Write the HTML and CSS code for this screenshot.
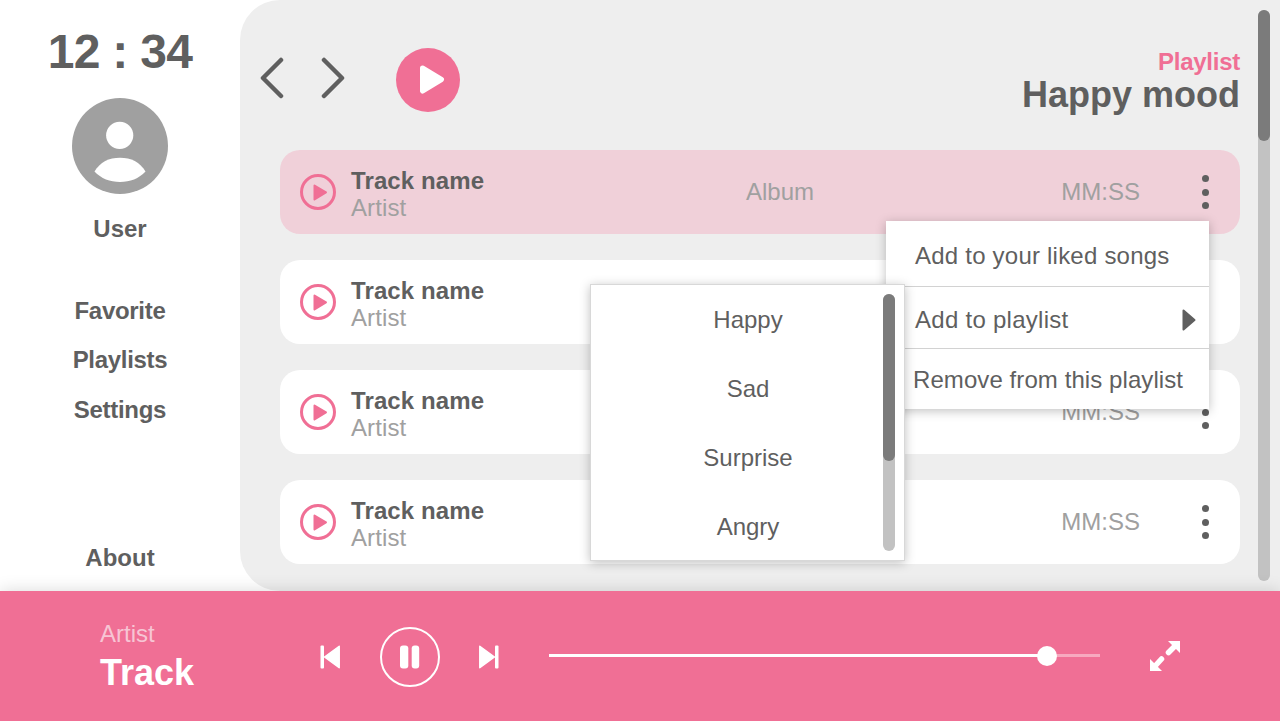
FILE: index.html
```html
<!DOCTYPE html>
<html lang="en">
<head>
<meta charset="UTF-8">
<meta name="viewport" content="width=device-width, initial-scale=1.0">
<title>Happy mood</title>
<link rel="stylesheet" href="styles.css">
</head>
<body>

<div class="top">
    <aside class="sidebar">
        <div class="clock">12 : 34</div>
        <svg class="avatar" viewBox="0 0 96 96">
            <circle cx="48" cy="48" r="48" fill="#a0a0a0"/>
            <circle cx="47.700" cy="37.300" r="13.600" fill="#fff"/>
            <path d="M22.500 73.500C28 64 37 59.700 48 59.700C59 59.700 68 64 73.500 73.500C67 80.500 58 84 48 84C38 84 29 80.500 22.500 73.500Z" fill="#fff"/>
        </svg>
        <div class="user">User</div>
        <nav class="nav">
            <a>Favorite</a>
            <a>Playlists</a>
            <a>Settings</a>
        </nav>
        <a class="about">About</a>
    </aside>

    <main class="panel">
        <header class="head">
            <svg class="arrow" viewBox="0 0 24 42"><path d="M21 3L3 21L21 39" /></svg>
            <svg class="arrow arrow-next" viewBox="0 0 24 42"><path d="M3 3L21 21L3 39" /></svg>
            <svg class="play-big" viewBox="0 0 64 64">
                <circle cx="32" cy="32" r="32" fill="#f06f95"/>
                <path d="M26.500 20L45.500 31.500L26.500 43Z" fill="#fff" stroke="#fff" stroke-width="5" stroke-linejoin="round"/>
            </svg>
            <div class="title">
                <div class="title-small">Playlist</div>
                <div class="title-big">Happy mood</div>
            </div>
        </header>

        <div class="rows">
            <div class="row row-active">
                <svg class="row-play" viewBox="0 0 36 36"><circle cx="18" cy="18" r="16.500" /><path d="M14.500 11.500L26 18.300L14.500 25.500Z" /></svg>
                <div class="track"><b>Track name</b><span>Artist</span></div>
                <div class="album">Album</div>
                <div class="time">MM:SS</div>
                <div class="dots"><i></i><i></i><i></i></div>
            </div>
            <div class="row">
                <svg class="row-play" viewBox="0 0 36 36"><circle cx="18" cy="18" r="16.500" /><path d="M14.500 11.500L26 18.300L14.500 25.500Z" /></svg>
                <div class="track"><b>Track name</b><span>Artist</span></div>
                <div class="time">MM:SS</div>
                <div class="dots"><i></i><i></i><i></i></div>
            </div>
            <div class="row">
                <svg class="row-play" viewBox="0 0 36 36"><circle cx="18" cy="18" r="16.500" /><path d="M14.500 11.500L26 18.300L14.500 25.500Z" /></svg>
                <div class="track"><b>Track name</b><span>Artist</span></div>
                <div class="time">MM:SS</div>
                <div class="dots"><i></i><i></i><i></i></div>
            </div>
            <div class="row">
                <svg class="row-play" viewBox="0 0 36 36"><circle cx="18" cy="18" r="16.500" /><path d="M14.500 11.500L26 18.300L14.500 25.500Z" /></svg>
                <div class="track"><b>Track name</b><span>Artist</span></div>
                <div class="time">MM:SS</div>
                <div class="dots"><i></i><i></i><i></i></div>
            </div>
        </div>

        <div class="scroll"><div class="scroll-thumb"></div></div>
    </main>
</div>

<footer class="player">
    <div class="now">
        <span>Artist</span>
        <b>Track</b>
    </div>
    <svg class="skip" viewBox="0 0 20 24"><rect x="0.500" y="0.500" width="3.500" height="23" rx="1"/><path d="M19.200 1.300V22.700L4.500 12Z" stroke="#fff" stroke-width="1.500" stroke-linejoin="round"/></svg>
    <svg class="pause" viewBox="0 0 60 60">
        <circle cx="30" cy="30" r="29" fill="none" stroke="#fff" stroke-width="2"/>
        <rect x="20" y="18.500" width="8.300" height="23" rx="3" fill="#fff"/>
        <rect x="31.700" y="18.500" width="7.500" height="23" rx="3" fill="#fff"/>
    </svg>
    <svg class="skip" viewBox="0 0 20 24"><path d="M0.800 1.300V22.700L15.500 12Z" stroke="#fff" stroke-width="1.500" stroke-linejoin="round"/><rect x="16" y="0.500" width="3.500" height="23" rx="1"/></svg>
    <div class="slider">
        <div class="slider-fill"><div class="slider-knob"></div></div>
    </div>
    <svg class="expand" viewBox="0 0 32 32">
        <path d="M19 1H31V13Z" fill="#fff"/>
        <path d="M25 7L19.500 12.500" stroke="#fff" stroke-width="5.500" stroke-linecap="round"/>
        <path d="M13 31H1V19Z" fill="#fff"/>
        <path d="M7 25L12.500 19" stroke="#fff" stroke-width="5.500" stroke-linecap="round"/>
    </svg>
</footer>

<div class="menu">
    <div class="menu-item menu-first">Add to your liked songs</div>
    <div class="menu-item menu-sub">Add to playlist
        <svg class="menu-arrow" viewBox="0 0 14 22"><path d="M1.500 1.500L12.500 11L1.500 20.500Z" fill="#5f5f5f" stroke="#5f5f5f" stroke-width="2" stroke-linejoin="round"/></svg>
    </div>
    <div class="menu-item menu-last">Remove from this playlist</div>
</div>

<div class="picker">
    <div class="picker-list">
        <div>Happy</div>
        <div>Sad</div>
        <div>Surprise</div>
        <div>Angry</div>
    </div>
    <div class="picker-scroll"><div class="picker-thumb"></div></div>
</div>

</body>
</html>
```

FILE: styles.css
```css
html, body {
    margin: 0;
    height: 100%;
}
body {
    width: 1280px;
    height: 721px;
    overflow: hidden;
    position: relative;
    display: flex;
    flex-direction: column;
    background-color: #fff;
    font-family: "Liberation Sans", Arial, sans-serif;
    color: #5f5f5f;
}
.top {
    display: flex;
    height: 591px;
}

/* sidebar */
.sidebar {
    width: 240px;
    display: flex;
    flex-direction: column;
    align-items: center;
    padding-top: 24px;
    box-sizing: border-box;
}
.clock {
    font-size: 48px;
    line-height: 55px;
    font-weight: bold;
    letter-spacing: -0.700px;
}
.avatar {
    width: 96px;
    height: 96px;
    margin-top: 19px;
}
.user {
    margin-top: 21px;
    font-size: 24px;
    line-height: 28px;
    font-weight: bold;
}
.nav {
    margin-top: 54px;
    display: flex;
    flex-direction: column;
    align-items: center;
    gap: 21.400px;
    font-size: 24px;
    line-height: 28px;
    font-weight: bold;
    letter-spacing: -0.300px;
}
.about {
    margin-top: auto;
    margin-bottom: 19px;
    font-size: 24px;
    line-height: 28px;
    font-weight: bold;
}

/* main panel */
.panel {
    flex: 1;
    position: relative;
    background-color: #eee;
    border-radius: 40px 0 0 40px;
    padding: 48px 40px 0;
    overflow: hidden;
}
.head {
    display: flex;
    align-items: center;
    height: 64px;
    margin-left: -20px;
}
.arrow {
    width: 24px;
    height: 42px;
    fill: none;
    stroke: #5f5f5f;
    stroke-width: 4.500;
    stroke-linecap: round;
    stroke-linejoin: round;
    flex: none;
    margin-top: -4px;
}
.arrow-next {
    margin-left: 37px;
}
.play-big {
    width: 64px;
    height: 64px;
    margin-left: 51px;
    flex: none;
}
.title {
    margin-left: auto;
    text-align: right;
    margin-top: 2px;
}
.title-small {
    font-size: 24px;
    line-height: 27px;
    font-weight: bold;
    color: #f06f95;
    letter-spacing: -0.250px;
}
.title-big {
    font-size: 36px;
    line-height: 40px;
    font-weight: bold;
}
.rows {
    margin-top: 38px;
    display: flex;
    flex-direction: column;
    gap: 26px;
}
.row {
    height: 84px;
    border-radius: 20px;
    background-color: #fff;
    display: flex;
    align-items: center;
    padding-left: 20px;
}
.row-active {
    background-color: #f0d0d9;
}
.row-play {
    width: 36px;
    height: 36px;
    flex: none;
}
.row-play circle {
    fill: none;
    stroke: #f06f95;
    stroke-width: 3;
}
.row-play path {
    fill: #f06f95;
    stroke: #f06f95;
    stroke-width: 2;
    stroke-linejoin: round;
}
.track {
    margin-left: 15px;
    width: 395px;
    padding-top: 4px;
    display: flex;
    flex-direction: column;
    font-size: 24px;
    line-height: 27px;
    letter-spacing: 0.100px;
}
.track span,
.album,
.time {
    color: #a0a0a0;
}
.album {
    font-size: 24px;
}
.time {
    margin-left: auto;
    font-size: 24px;
}
.dots {
    flex: none;
    display: flex;
    flex-direction: column;
    align-items: center;
    gap: 6.500px;
    margin-left: 40px;
    width: 50px;
    margin-right: 10px;
}
.dots i {
    width: 7px;
    height: 7px;
    border-radius: 50%;
    background-color: #5f5f5f;
}
.scroll {
    position: absolute;
    right: 10px;
    top: 10px;
    width: 12px;
    height: 571px;
    border-radius: 6px;
    background-color: #c2c2c2;
}
.scroll-thumb {
    height: 131px;
    border-radius: 6px;
    background-color: #7b7b7b;
}

/* bottom player */
.player {
    position: relative;
    height: 130px;
    background-color: #f06f95;
    box-shadow: 0 0 16px rgba(0, 0, 0, 0.15);
    display: flex;
    align-items: center;
    color: #fff;
}
.now {
    width: 220px;
    padding: 4px 0 0 100px;
    box-sizing: border-box;
    display: flex;
    flex-direction: column;
    flex: none;
}
.now span {
    font-size: 24px;
    line-height: 28px;
    color: #f7c5d4;
}
.now b {
    margin-top: 2px;
    font-size: 36px;
    line-height: 46px;
}
.skip {
    width: 20px;
    height: 24px;
    fill: #fff;
    flex: none;
    margin-left: 100px;
    margin-top: 1px;
}
.pause {
    width: 60px;
    height: 60px;
    margin-left: 40px;
    margin-top: 2px;
    flex: none;
}
.pause + .skip {
    margin-left: 39px;
}
.slider {
    width: 551px;
    height: 3px;
    margin-left: 50px;
    margin-top: -1px;
    background-color: #f7a9bf;
    flex: none;
}
.slider-fill {
    width: 498px;
    height: 3px;
    background-color: #fff;
    position: relative;
}
.slider-knob {
    position: absolute;
    right: -10px;
    top: -8.500px;
    width: 20px;
    height: 20px;
    border-radius: 50%;
    background-color: #fff;
}
.expand {
    width: 32px;
    height: 32px;
    margin-left: 49px;
    flex: none;
}

/* popups */
.menu {
    position: absolute;
    left: 886px;
    top: 221px;
    width: 323px;
    height: 188px;
    background-color: #fff;
    box-shadow: 0 2px 10px rgba(0, 0, 0, 0.25);
    font-size: 24px;
}
.menu-item {
    box-sizing: border-box;
    padding-left: 29px;
    display: flex;
    align-items: center;
    border-bottom: 1px solid #d2d2d2;
}
.menu-first {
    height: 66px;
    padding-top: 4px;
    letter-spacing: 0.220px;
}
.menu-sub {
    height: 62px;
    padding-top: 5px;
    letter-spacing: 0.270px;
}
.menu-last {
    height: 60px;
    padding-left: 27px;
    padding-top: 2px;
    border-bottom: 0;
    letter-spacing: 0.080px;
}
.menu-arrow {
    width: 14px;
    height: 22px;
    margin-left: auto;
    margin-right: 13px;
}
.picker {
    position: absolute;
    left: 590px;
    top: 284px;
    width: 315px;
    height: 277px;
    box-sizing: border-box;
    background-color: #fff;
    border: 1px solid #d8d8d8;
    box-shadow: 0 2px 10px rgba(0, 0, 0, 0.25);
    font-size: 24px;
    display: flex;
}
.picker-list {
    width: 314px;
    height: 100%;
    display: flex;
    flex-direction: column;
    align-items: center;
    gap: 41px;
    padding: 21px 0 0 1px;
    box-sizing: border-box;
    overflow: hidden;
    line-height: 28px;
}
.picker-scroll {
    position: absolute;
    right: 9px;
    top: 9px;
    width: 12px;
    height: 257px;
    border-radius: 6px;
    background-color: #c2c2c2;
}
.picker-thumb {
    height: 167px;
    border-radius: 6px;
    background-color: #7b7b7b;
}
```
